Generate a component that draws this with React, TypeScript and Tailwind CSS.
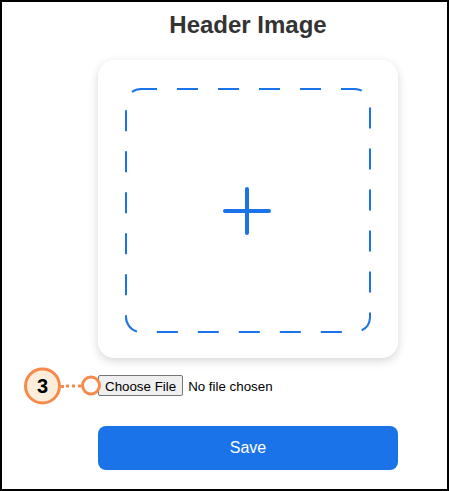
import React from "react";

const BLUE = "#1a73e8";

function DropZone() {
  return (
    <div className="w-[300px] h-[298px] rounded-2xl bg-white shadow-[0_3px_10px_rgba(0,0,0,0.16)]">
      <svg width="300" height="298" viewBox="0 0 300 298" fill="none">
        <rect
          x="28"
          y="29"
          width="244"
          height="243"
          rx="15"
          stroke={BLUE}
          strokeWidth="2"
          strokeDasharray="21 20"
          strokeDashoffset="5"
        />
        <path d="M127 151H171M149 129V173" stroke={BLUE} strokeWidth="4" strokeLinecap="round" />
      </svg>
    </div>
  );
}

function StepBadge() {
  return (
    <div className="absolute left-[-74px] top-1/2 -translate-y-1/2 flex items-center pointer-events-none">
      <div className="w-[37px] h-[37px] rounded-full border-[3px] border-[#f58a4b] bg-[#fdeedb] flex items-center justify-center text-[20px] font-bold text-black leading-none">
        3
      </div>
      <div className="w-[20px] border-t-[3px] border-dotted border-[#f58a4b]" />
      <div className="w-[20px] h-[20px] rounded-full border-[3px] border-[#f58a4b] bg-white" />
    </div>
  );
}

export default function App() {
  return (
    <div className="w-[449px] h-[491px] border-2 border-black bg-white font-['Liberation_Sans',Arial,sans-serif]">
      <div className="pl-[96px] pt-[7px] flex flex-col w-[396px]">
        <h1 className="text-[24px] leading-8 font-bold text-[#333333] text-center">Header Image</h1>

        <div className="mt-[19px]">
          <DropZone />
        </div>

        <div className="relative mt-[17px] flex items-center h-[21px]">
          <input
            type="file"
            className="text-[13.33px] leading-[21px] text-black font-['Liberation_Sans',Arial,sans-serif] file:h-[21px] file:px-[6px] file:mr-[5px] file:border file:border-[#767676] file:rounded-[2px] file:bg-[#efefef] file:text-black"
          />
          <StepBadge />
        </div>

        <button
          type="button"
          className="mt-[30px] w-[300px] h-[44px] rounded-lg bg-[#1a73e8] text-white text-[16px]"
        >
          Save
        </button>
      </div>
    </div>
  );
}
